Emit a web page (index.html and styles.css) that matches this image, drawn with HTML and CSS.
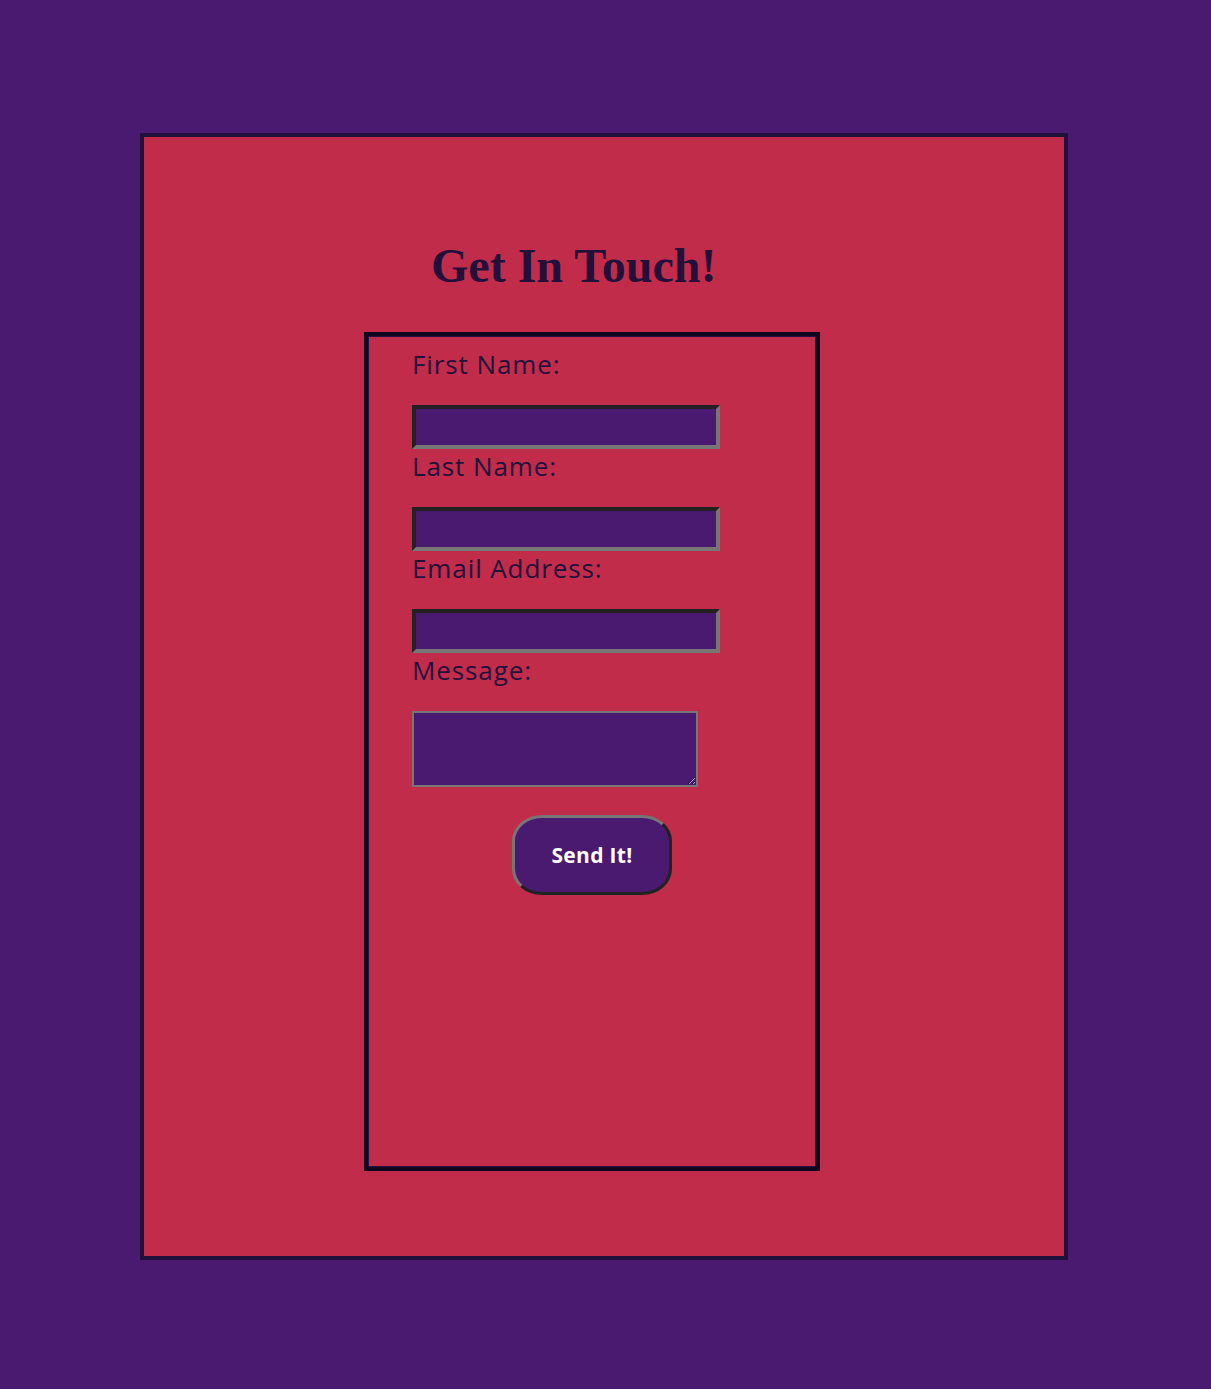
FILE: index.html
```html
<!DOCTYPE html>
<html lang="en">
<head>
<meta charset="utf-8">
<title>Get In Touch!</title>
<link rel="stylesheet" href="styles.css">
</head>
<body>
<main class="page">
  <h1 class="title">Get In Touch!</h1>
  <form class="contact">
    <label class="field-label" for="first">First Name:</label>
    <input class="field-input" id="first" type="text">
    <label class="field-label" for="last">Last Name:</label>
    <input class="field-input" id="last" type="text">
    <label class="field-label" for="email">Email Address:</label>
    <input class="field-input" id="email" type="email">
    <label class="field-label" for="msg">Message:</label>
    <textarea class="field-area" id="msg"></textarea>
    <button class="send" type="button">Send It!</button>
  </form>
</main>
</body>
</html>
```

FILE: styles.css
```css
html, body {
  background: #4a1970;
}
body {
  margin: 8px;
}
.page {
  box-sizing: border-box;
  width: 928px;
  height: 1127px;
  margin: 125px 0 0 132px;
  background: #c12c4a;
  border: 4px solid #230f3b;
  padding-top: 103px;
}
.title {
  margin: 0 0 40px 287px;
  font-family: "Liberation Serif", "Times New Roman", serif;
  font-weight: bold;
  font-size: 48px;
  line-height: 52px;
  color: #22103b;
}
.contact {
  box-sizing: border-box;
  width: 456px;
  height: 839px;
  margin-left: 220px;
  border: 4px solid #12071f;
  box-shadow: inset 0 0 0 1px #2a1048;
  padding: 13px 0 0 44px;
}
.field-label {
  display: block;
  font-family: "Open Sans", "DejaVu Sans", sans-serif;
  font-size: 26px;
  font-weight: 500;
  letter-spacing: 0.9px;
  line-height: 30px;
  color: #22103b;
  margin-bottom: 26px;
}
.field-input {
  display: block;
  box-sizing: border-box;
  width: 308px;
  height: 44px;
  margin: 0 0 2px;
  padding: 0;
  background: #4a1970;
  border: 4px solid;
  border-color: #222222 #767676 #767676 #222222;
  outline: none;
}
.field-area {
  display: block;
  box-sizing: border-box;
  width: 286px;
  height: 76px;
  margin: 0;
  padding: 0;
  background: #4a1970;
  border: 2px solid #767676;
  color: #fff;
}
.send {
  display: block;
  box-sizing: border-box;
  width: 160px;
  height: 80px;
  margin: 28px 0 0 100px;
  background: #4a1970;
  border: 3px solid;
  border-color: #767676 #222222 #222222 #767676;
  border-radius: 30px / 26px;
  color: #ffffff;
  font-family: "Open Sans", "DejaVu Sans", sans-serif;
  font-weight: 700;
  font-size: 21px;
  letter-spacing: 0.3px;
}
```
